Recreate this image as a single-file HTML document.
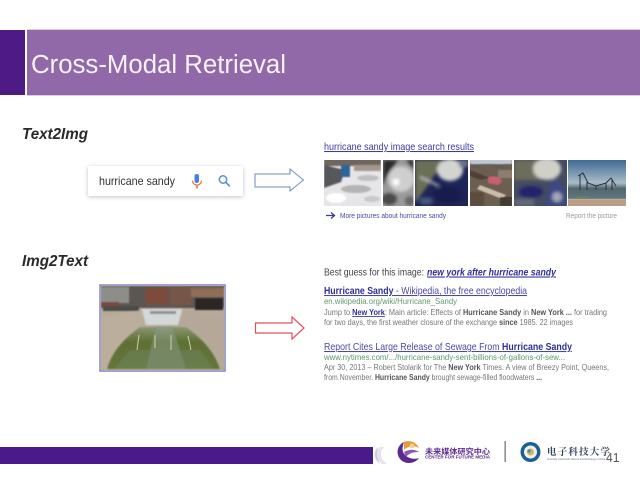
<!DOCTYPE html>
<html lang="en"><head><meta charset="utf-8"><title>Cross-Modal Retrieval</title>
<style>
html,body{margin:0;padding:0;background:#fff;width:640px;height:480px;overflow:hidden}
svg{display:block}
text{font-family:"Liberation Sans","Noto Sans CJK SC",sans-serif}
</style></head><body>
<svg width="640" height="480" viewBox="0 0 640 480" xmlns="http://www.w3.org/2000/svg">
<defs>
<filter id="b" x="-5%" y="-30%" width="110%" height="160%"><feGaussianBlur stdDeviation="0.35"/></filter>
<filter id="b0" x="-10%" y="-10%" width="120%" height="120%"><feGaussianBlur stdDeviation="0.6"/></filter>
<filter id="b1" x="-20%" y="-20%" width="140%" height="140%"><feGaussianBlur stdDeviation="0.9"/></filter>
<filter id="b2" x="-30%" y="-30%" width="160%" height="160%"><feGaussianBlur stdDeviation="1.5"/></filter>
<filter id="sh" x="-10%" y="-30%" width="120%" height="170%"><feDropShadow dx="0" dy="1" stdDeviation="2" flood-color="#000" flood-opacity=".24"/></filter>
<linearGradient id="sea" x1="0" y1="0" x2="0" y2="1"><stop offset="0" stop-color="#3f6a92"/><stop offset=".5" stop-color="#a9bdc9"/><stop offset=".62" stop-color="#51666e"/><stop offset=".83" stop-color="#63757a"/><stop offset=".88" stop-color="#e3ded2"/><stop offset="1" stop-color="#c8ad95"/></linearGradient>
<linearGradient id="water" x1="0" y1="0" x2="0" y2="1"><stop offset="0" stop-color="#8a9672"/><stop offset=".35" stop-color="#5e7034"/><stop offset="1" stop-color="#64753a"/></linearGradient>
<clipPath id="c1"><rect x="324" y="160" width="57" height="46"/></clipPath>
<clipPath id="c2"><rect x="383" y="160" width="30.500" height="46"/></clipPath>
<clipPath id="c3"><rect x="415" y="160" width="53" height="46"/></clipPath>
<clipPath id="c4"><rect x="470" y="160" width="42" height="46"/></clipPath>
<clipPath id="c5"><rect x="514" y="160" width="53" height="46"/></clipPath>
<clipPath id="c6"><rect x="568" y="160" width="58" height="46"/></clipPath>
<clipPath id="c7"><rect x="101" y="286" width="123" height="84"/></clipPath>
</defs>

<!-- Header -->
<rect x="0" y="30" width="25" height="65" fill="#4d1a86"/>
<rect x="25" y="29" width="615" height="67" fill="#dccbe6"/>
<rect x="27" y="30" width="613" height="65" fill="#9169a9"/>
<rect x="25" y="29" width="2" height="67" fill="#fff"/>
<text x="31" y="73" font-size="25.500" fill="#f7f1fa" textLength="255" lengthAdjust="spacingAndGlyphs" filter="url(#b)">Cross-Modal Retrieval</text>

<!-- Labels -->
<text x="22" y="139" font-size="16" font-weight="700" font-style="italic" fill="#2b2b2b" textLength="66" lengthAdjust="spacingAndGlyphs" filter="url(#b)">Text2Img</text>
<text x="22" y="266" font-size="16" font-weight="700" font-style="italic" fill="#2b2b2b" textLength="66" lengthAdjust="spacingAndGlyphs" filter="url(#b)">Img2Text</text>

<!-- Search box -->
<rect x="88" y="166" width="155" height="30" rx="2" fill="#fff" filter="url(#sh)"/>
<text x="99" y="185" font-size="12" fill="#333" textLength="76" lengthAdjust="spacingAndGlyphs" filter="url(#b)">hurricane sandy</text>
<g filter="url(#b)">
<rect x="194.500" y="174" width="4.500" height="9" rx="2.200" fill="#4a7ee0"/>
<path d="M192.500 180.500c0 6 9 6 9 0" fill="none" stroke="#e8843a" stroke-width="1.300"/>
<path d="M197 185.500v3" stroke="#d9594a" stroke-width="1.300"/>
<circle cx="223" cy="179.500" r="3.700" fill="none" stroke="#5a8fd0" stroke-width="1.500"/>
<path d="M225.800 182.300l4 4" stroke="#5a8fd0" stroke-width="1.700"/>
</g>

<!-- Arrows -->
<path d="M255 174H290V169L303.500 180L290 191V187H255Z" fill="#fff" stroke="#6f8cc0" stroke-width="1"/>
<path d="M255.500 323H292V317L304 328L292 339V333H255.500Z" fill="#fff" stroke="#e0505c" stroke-width="1.200"/>

<!-- Top result -->
<text x="324" y="150" font-size="10.500" fill="#3d3b9c" text-decoration="underline" textLength="150" lengthAdjust="spacingAndGlyphs" filter="url(#b)">hurricane sandy image search results</text>

<g clip-path="url(#c1)"><rect x="324" y="160" width="57" height="46" fill="#e6e6e8"/>
<g filter="url(#b1)"><rect x="324" y="158" width="57" height="8" fill="#6e665c"/><path d="M324 165L345 170L341 182L324 188Z" fill="#57595c"/><rect x="341" y="165" width="9" height="12" fill="#2f6498"/><rect x="354" y="165" width="27" height="6" fill="#a3988a"/><ellipse cx="356" cy="189" rx="15" ry="4" fill="#b4b4b6"/><ellipse cx="368" cy="178" rx="11" ry="3" fill="#c0c0c2"/><ellipse cx="372" cy="199" rx="8" ry="3" fill="#c8c8ca"/><ellipse cx="336" cy="198" rx="10" ry="5" fill="#fff"/></g></g>

<g clip-path="url(#c2)"><rect x="383" y="160" width="31" height="46" fill="#9a9a9a"/>
<g filter="url(#b2)"><path d="M383 160H398L387 176L383 186Z" fill="#2b2b2c"/><path d="M406 160H414V170Z" fill="#333"/><ellipse cx="401" cy="179" rx="13" ry="13" fill="#cfcfcf"/><circle cx="396" cy="182" r="3.500" fill="#fff"/><ellipse cx="389" cy="199" rx="8" ry="6" fill="#4a4a4a"/><ellipse cx="410" cy="201" rx="5" ry="5" fill="#666"/></g></g>

<g clip-path="url(#c3)"><rect x="415" y="160" width="53" height="46" fill="#1e2456"/>
<g filter="url(#b2)"><path d="M415 160H445L434 176L426 188L415 203Z" fill="#6a7056"/><ellipse cx="450" cy="170" rx="13" ry="11" fill="#d2d4d0"/><rect x="459" y="160" width="9" height="7" fill="#6a7686"/><path d="M420 177L439 186" stroke="#bfc3c0" stroke-width="2"/><ellipse cx="448" cy="195" rx="14" ry="8" fill="#151a4c"/><ellipse cx="426" cy="201" rx="7" ry="4" fill="#45547a"/></g></g>

<g clip-path="url(#c4)"><rect x="470" y="160" width="42" height="46" fill="#6d5e52"/>
<g filter="url(#b0)"><rect x="470" y="158" width="42" height="6" fill="#c0c7d4"/><rect x="472" y="164" width="9" height="4" fill="#5e5b56"/><rect x="492" y="164" width="12" height="4" fill="#5e5b56"/><path d="M470 170L490 178L480 180L470 176Z" fill="#4f4036"/><path d="M488 178C490 175 500 176 502 181L498 185L488 183Z" fill="#c9616c"/><path d="M480 185L506 195L502 199L477 189Z" fill="#c9bea8"/><rect x="470" y="192" width="14" height="14" fill="#5c4e3e"/><rect x="498" y="170" width="14" height="8" fill="#8c7d72"/><rect x="500" y="197" width="12" height="9" fill="#423b33"/></g></g>

<g clip-path="url(#c5)"><rect x="514" y="160" width="53" height="46" fill="#454b62"/>
<g filter="url(#b2)"><rect x="514" y="160" width="26" height="20" fill="#6c6d5a"/><ellipse cx="547" cy="169" rx="14" ry="11" fill="#d0d0c8"/><ellipse cx="531" cy="192" rx="12" ry="6" fill="#22246e"/><path d="M553 178L567 190V206H545Z" fill="#3e4884"/><ellipse cx="557" cy="197" rx="5" ry="5" fill="#a4a6b8"/><rect x="514" y="199" width="20" height="7" fill="#656b78"/></g></g>

<g clip-path="url(#c6)"><rect x="568" y="160" width="58" height="46" fill="url(#sea)"/>
<g filter="url(#b)" fill="none" stroke="#2d3138" stroke-width="1"><path d="M578 176L583 173L588 183L596 186L606 183L611 178L616 186"/><path d="M580 175V190M587 182V190M596 186V190M606 183V190M612 179V190"/></g>
<rect x="568" y="200" width="58" height="6" fill="#bd9c84" filter="url(#b)"/><rect x="575" y="197" width="12" height="2" fill="#7a8458" filter="url(#b)"/></g>

<path d="M326 215.500H334M331 212.500L334.500 215.500L331 218.500" fill="none" stroke="#3b3a9c" stroke-width="1.300"/>
<text x="340" y="218" font-size="7" fill="#4a48a4" textLength="106" lengthAdjust="spacingAndGlyphs" filter="url(#b)">More pictures about hurricane sandy</text>
<text x="566" y="218" font-size="7" fill="#9a9a9a" textLength="51" lengthAdjust="spacingAndGlyphs" filter="url(#b)">Report the picture</text>

<!-- Source image -->
<rect x="100" y="285" width="125" height="86" fill="#fff" stroke="#6f70b3" stroke-width="1.300"/>
<g clip-path="url(#c7)"><rect x="101" y="286" width="123" height="84" fill="#b8a998"/>
<g filter="url(#b1)">
<rect x="101" y="286" width="123" height="22" fill="#5c5652"/>
<rect x="101" y="287" width="28" height="16" fill="#8d8d8a"/><rect x="101" y="302" width="18" height="4" fill="#7e463c"/>
<rect x="146" y="288" width="22" height="16" fill="#7d4c3a"/><rect x="170" y="287" width="22" height="18" fill="#76564a"/>
<rect x="191" y="288" width="33" height="9" fill="#8f6d58"/><rect x="195" y="298" width="28" height="12" fill="#2a2726"/><rect x="103" y="306" width="36" height="5" fill="#4a4e48"/>
<path d="M142 309H182V325H142Z" fill="#d4d8d8"/><path d="M150 311H176V314H150Z" fill="#8a9090"/>
<path d="M101 318L142 310L146 325L116 352L107 370H101Z" fill="#bcae9c"/>
<path d="M224 320L182 310L178 325L208 352L220 370H224Z" fill="#b5a898"/>
<path d="M140 327H186C200 337 214 350 220 369H107C112 350 126 337 140 327Z" fill="url(#water)"/>
<path d="M156 326H172L186 369H146Z" fill="#8c9c8a" opacity=".5"/>
<path d="M130 350H200L214 369H114Z" fill="#74866a" opacity=".4"/>
</g>
<path d="M139 335L137 350M155 335V348M171 335V350M188 336L191 350" stroke="#e6e4c6" stroke-width="1" opacity=".8" filter="url(#b)"/>
</g>

<!-- Result text -->
<g filter="url(#b)">
<text x="324" y="275.500" font-size="10.500" fill="#444" textLength="100" lengthAdjust="spacingAndGlyphs">Best guess for this image:</text>
<text x="427" y="275.500" font-size="10.500" font-weight="700" font-style="italic" fill="#2f2d98" text-decoration="underline" textLength="129" lengthAdjust="spacingAndGlyphs">new york after hurricane sandy</text>

<text x="324" y="294" font-size="10.500" fill="#4a48a8" text-decoration="underline" textLength="203" lengthAdjust="spacingAndGlyphs"><tspan font-weight="700" fill="#2f2d98">Hurricane Sandy</tspan> - Wikipedia, the free encyclopedia</text>
<text x="324" y="304" font-size="8.500" fill="#5c9a6c" textLength="133" lengthAdjust="spacingAndGlyphs">en.wikipedia.org/wiki/Hurricane_Sandy</text>
<text x="324" y="315" font-size="8" fill="#777" textLength="283" lengthAdjust="spacingAndGlyphs">Jump to <tspan font-weight="700" fill="#2f2d98" text-decoration="underline">New York</tspan>: Main article: Effects of <tspan font-weight="700" fill="#555">Hurricane Sandy</tspan> in <tspan font-weight="700" fill="#555">New York ...</tspan> for trading</text>
<text x="324" y="325" font-size="8" fill="#777" textLength="249" lengthAdjust="spacingAndGlyphs">for two days, the first weather closure of the exchange <tspan font-weight="700" fill="#555">since</tspan> 1985. 22 images</text>

<text x="324" y="350" font-size="10.500" fill="#4a48a8" text-decoration="underline" textLength="248" lengthAdjust="spacingAndGlyphs">Report Cites Large Release of Sewage From <tspan font-weight="700" fill="#2f2d98">Hurricane Sandy</tspan></text>
<text x="324" y="360" font-size="8.500" fill="#5c9a6c" textLength="241" lengthAdjust="spacingAndGlyphs">www.nytimes.com/.../hurricane-sandy-sent-billions-of-gallons-of-sew...</text>
<text x="324" y="370" font-size="8" fill="#777" textLength="285" lengthAdjust="spacingAndGlyphs">Apr 30, 2013 – Robert Stolarik for The <tspan font-weight="700" fill="#555">New York</tspan> Times. A view of Breezy Point, Queens,</text>
<text x="324" y="380" font-size="8" fill="#777" textLength="218" lengthAdjust="spacingAndGlyphs">from November. <tspan font-weight="700" fill="#555">Hurricane Sandy</tspan> brought sewage-filled floodwaters <tspan font-weight="700" fill="#555">...</tspan></text>
</g>

<!-- Footer -->
<rect x="0" y="447" width="373" height="17" fill="#4a1a8a"/>
<path d="M378 447C373 452 374 459 380 464C377 458 377 452 378 447Z" fill="#cfc6de"/>
<path d="M384 447C379 452 380 459 387 464H382C376 459 375 452 380 447Z" fill="#e6e1ec"/>

<g filter="url(#b)">
<path d="M404 442A11 11 0 0 0 409 463C413 463 417 461 419 458C413 460 406 458 403 452C402 448 403 445 404 442Z" fill="#5a2a8e"/>
<path d="M404 442C408 440 416 441 419 448C414 445 408 446 404 450Z" fill="#e89a3c"/>
<path d="M404 452C409 449 415 449 419 452C414 452 409 453 406 457Z" fill="#8a5ab0"/>
<circle cx="412" cy="446" r="2.400" fill="#f2d08a"/>
<text x="425" y="454" font-size="7.500" font-weight="700" fill="#5a2a8e" textLength="65" lengthAdjust="spacingAndGlyphs">未来媒体研究中心</text>
<text x="425" y="458.300" font-size="4.400" font-weight="700" fill="#5a2a8e" textLength="65" lengthAdjust="spacingAndGlyphs">CENTER FOR FUTURE MEDIA</text>
<rect x="504.500" y="441" width="1.300" height="21" fill="#777"/>
<circle cx="530.500" cy="452" r="10" fill="#1f5f92"/>
<circle cx="530.500" cy="452" r="6.500" fill="#eef2ee"/>
<circle cx="530.500" cy="452" r="3.500" fill="#d9b45a"/>
<circle cx="529" cy="451" r="1.800" fill="#4d8cc0"/>
<text x="547" y="455" font-size="9.500" font-weight="700" fill="#33475a" textLength="63" style="font-family:'Noto Serif CJK SC',serif">电子科技大学</text>
<text x="547" y="460" font-size="3" fill="#666" textLength="58" lengthAdjust="spacingAndGlyphs">University of Electronic Science and Technology of China</text>
</g>
<text x="606" y="462" font-size="12.500" fill="#555" textLength="13.500" lengthAdjust="spacingAndGlyphs">41</text>
</svg>
</body></html>
